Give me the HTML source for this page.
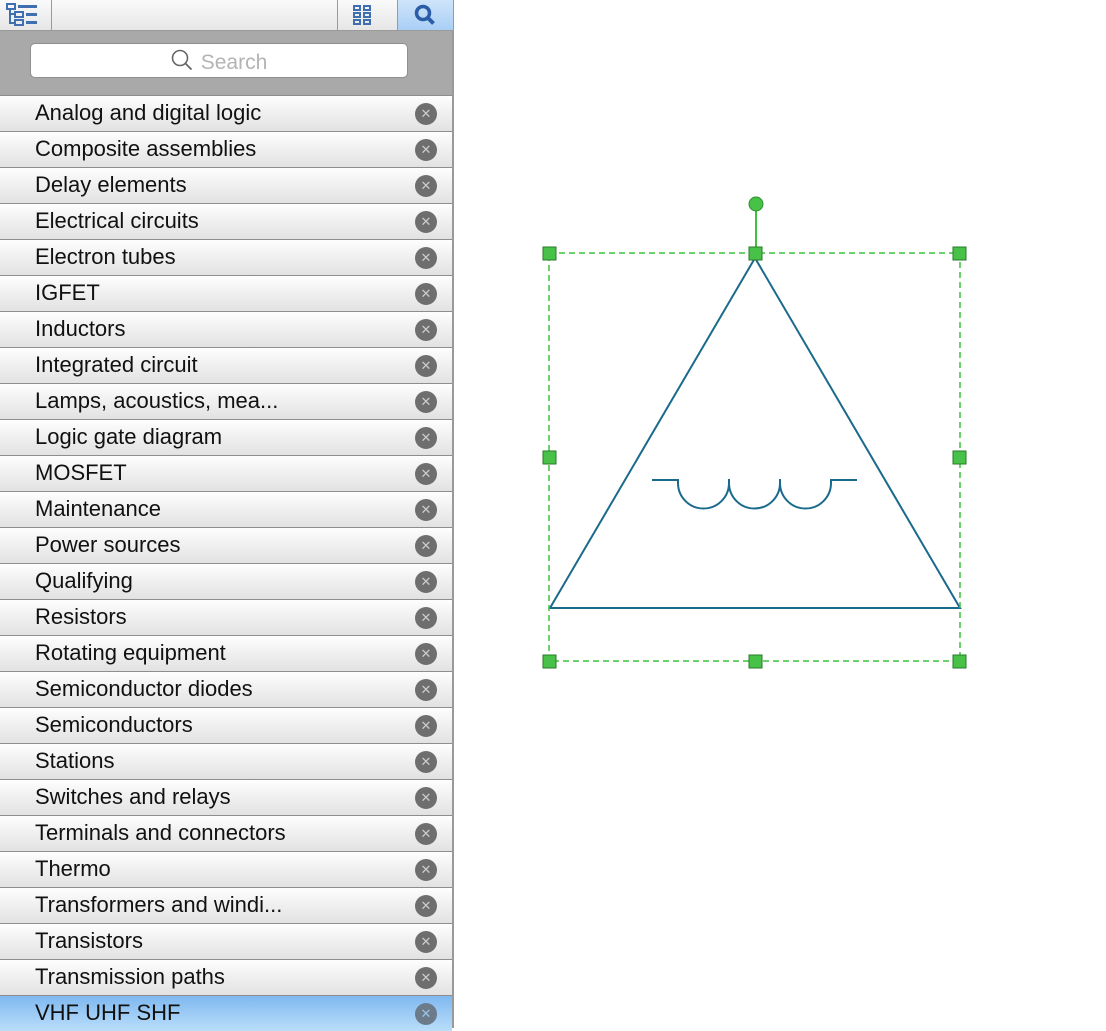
<!DOCTYPE html><html><head><style>
body{margin:0;width:1106px;height:1028px;background:#fff;position:relative;overflow:hidden;font-family:"Liberation Sans",sans-serif}
#side{position:absolute;left:0;top:0;width:452px;height:1028px;border-right:2px solid #9a9a9a;background:#fff}
#tb{position:absolute;left:0;top:0;width:452px;height:30px;background:linear-gradient(#fafafa,#e6e6e6);border-bottom:1px solid #9a9a9a}
#sa{position:absolute;left:0;top:31px;width:452px;height:64px;background:#a9a9a9}
#sb{position:absolute;left:30px;top:12px;width:378px;height:35px;background:#fff;border:1px solid #8f8f8f;border-radius:5px;box-sizing:border-box;text-align:center;font-size:21px;color:#b4b4b4;line-height:38px}
.row{position:absolute;left:0;width:452px;height:35px;border-top:1px solid #8e8e8e;background:linear-gradient(#fefefe,#f2f2f2 40%,#e2e2e2);font-size:22px;line-height:33px;color:#111}
.row span{position:absolute;left:35px;top:0}
.row i{position:absolute;left:415px;top:7px;width:22px;height:22px;border-radius:50%;background:#6e6e6e;color:#ccc;font-style:normal;font-size:13px;line-height:22px;text-align:center}
.sel{background:linear-gradient(#7fb8f0,#b9defa)}
</style></head><body>
<div id="side">
<div id="tb">
<svg width="40" height="30" style="position:absolute;left:4px;top:0"><g fill="none" stroke="#3f6fb0" stroke-width="2"><rect x="3" y="4" width="8" height="5"/><rect x="11" y="12" width="8" height="5"/><rect x="11" y="20" width="8" height="5"/><path d="M6 9v14h5M6 14h5"/></g><g fill="#3f6fb0"><rect x="14" y="5" width="19" height="3"/><rect x="22" y="13" width="11" height="3"/><rect x="22" y="21" width="11" height="3"/></g></svg>
<div style="position:absolute;left:51px;top:0;width:1px;height:30px;background:#9a9a9a"></div>
<div style="position:absolute;left:337px;top:0;width:1px;height:30px;background:#9a9a9a"></div>
<svg width="24" height="24" style="position:absolute;left:352px;top:4px"><g fill="none" stroke="#3f6fb0" stroke-width="2"><rect x="2" y="2" width="6" height="4"/><rect x="12" y="2" width="6" height="4"/><rect x="2" y="9" width="6" height="4"/><rect x="12" y="9" width="6" height="4"/><rect x="2" y="16" width="6" height="4"/><rect x="12" y="16" width="6" height="4"/></g></svg>
<div style="position:absolute;left:397px;top:0;width:55px;height:30px;background:linear-gradient(#cfe4fa,#a9cff5);border-left:1px solid #9a9a9a"></div>
<svg width="30" height="30" style="position:absolute;left:410px;top:0"><circle cx="13" cy="13" r="6.5" fill="none" stroke="#2b5ca8" stroke-width="3.5"/><path d="M17.5 17.5l6 6" stroke="#2b5ca8" stroke-width="4"/></svg>
</div>
<div id="sa"><div id="sb"><svg width="24" height="24" style="vertical-align:-4px;margin-right:6px"><circle cx="9" cy="9" r="7.5" fill="none" stroke="#666" stroke-width="1.6"/><path d="M14.5 14.5l6 6" stroke="#666" stroke-width="1.8"/></svg>Search</div></div>
<div class="row" style="top:95px"><span>Analog and digital logic</span><i>✕</i></div>
<div class="row" style="top:131px"><span>Composite assemblies</span><i>✕</i></div>
<div class="row" style="top:167px"><span>Delay elements</span><i>✕</i></div>
<div class="row" style="top:203px"><span>Electrical circuits</span><i>✕</i></div>
<div class="row" style="top:239px"><span>Electron tubes</span><i>✕</i></div>
<div class="row" style="top:275px"><span>IGFET</span><i>✕</i></div>
<div class="row" style="top:311px"><span>Inductors</span><i>✕</i></div>
<div class="row" style="top:347px"><span>Integrated circuit</span><i>✕</i></div>
<div class="row" style="top:383px"><span>Lamps, acoustics, mea...</span><i>✕</i></div>
<div class="row" style="top:419px"><span>Logic gate diagram</span><i>✕</i></div>
<div class="row" style="top:455px"><span>MOSFET</span><i>✕</i></div>
<div class="row" style="top:491px"><span>Maintenance</span><i>✕</i></div>
<div class="row" style="top:527px"><span>Power sources</span><i>✕</i></div>
<div class="row" style="top:563px"><span>Qualifying</span><i>✕</i></div>
<div class="row" style="top:599px"><span>Resistors</span><i>✕</i></div>
<div class="row" style="top:635px"><span>Rotating equipment</span><i>✕</i></div>
<div class="row" style="top:671px"><span>Semiconductor diodes</span><i>✕</i></div>
<div class="row" style="top:707px"><span>Semiconductors</span><i>✕</i></div>
<div class="row" style="top:743px"><span>Stations</span><i>✕</i></div>
<div class="row" style="top:779px"><span>Switches and relays</span><i>✕</i></div>
<div class="row" style="top:815px"><span>Terminals and connectors</span><i>✕</i></div>
<div class="row" style="top:851px"><span>Thermo</span><i>✕</i></div>
<div class="row" style="top:887px"><span>Transformers and windi...</span><i>✕</i></div>
<div class="row" style="top:923px"><span>Transistors</span><i>✕</i></div>
<div class="row" style="top:959px"><span>Transmission paths</span><i>✕</i></div>
<div class="row sel" style="top:995px"><span>VHF UHF SHF</span><i style="background:#6c7b8a;color:#9fc3e8">✕</i></div>
</div>
<svg width="1106" height="1028" style="position:absolute;left:0;top:0">
<g fill="none" stroke="#1a6a8c" stroke-width="2">
<path d="M755 258L550 608H960Z" stroke-linejoin="miter"/>
<path d="M652 480H678V483A25.5 25.5 0 0 0 729 483V479V483A25.5 25.5 0 0 0 780 483V479V483A25.5 25.5 0 0 0 831 483V480H857"/>
</g>
<rect x="549" y="253" width="411" height="408" fill="none" stroke="#3dc23d" stroke-width="1.5" stroke-dasharray="6 4"/>
<path d="M756 204V253" stroke="#3dc23d" stroke-width="2"/>
<circle cx="756" cy="204" r="7" fill="#47c147" stroke="#2f8f2f"/>
<g fill="#47c147" stroke="#2a7a2a" stroke-width="1">
<rect x="543" y="247" width="13" height="13"/><rect x="749" y="247" width="13" height="13"/><rect x="953" y="247" width="13" height="13"/>
<rect x="543" y="451" width="13" height="13"/><rect x="953" y="451" width="13" height="13"/>
<rect x="543" y="655" width="13" height="13"/><rect x="749" y="655" width="13" height="13"/><rect x="953" y="655" width="13" height="13"/>
</g></svg>
</body></html>
